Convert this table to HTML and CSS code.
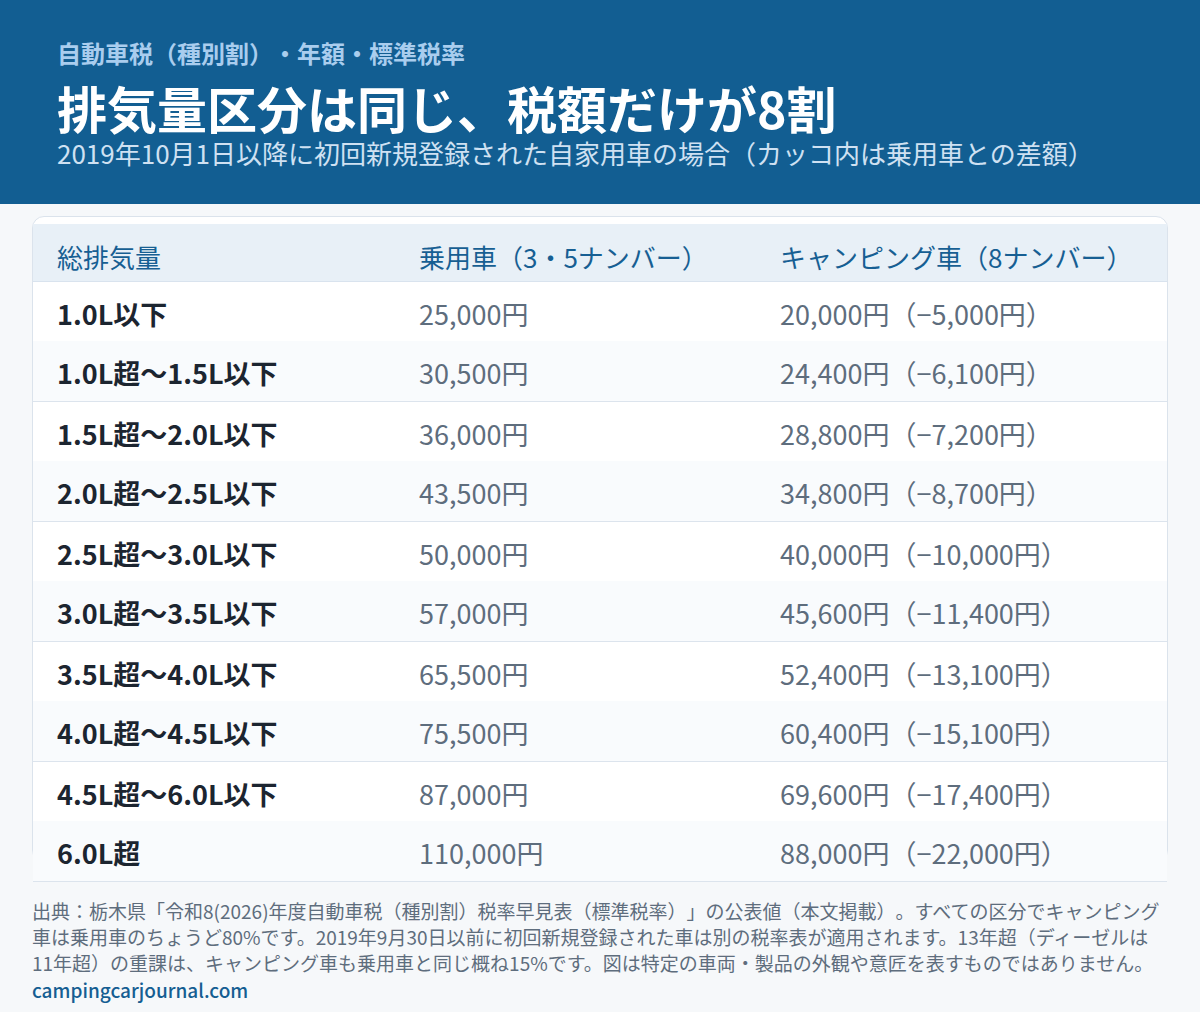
FILE: index.html
```html
<!DOCTYPE html>
<html lang="ja">
<head>
<meta charset="utf-8">
<title>自動車税 排気量区分</title>
<link rel="stylesheet" href="styles.css">
</head>
<body>
<header class="band">
  <p class="eyebrow">自動車税（種別割）・年額・標準税率</p>
  <h1 class="title">排気量区分は同じ、税額だけが8割</h1>
  <p class="subtitle">2019年10月1日以降に初回新規登録された自家用車の場合（カッコ内は乗用車との差額）</p>
</header>
<main class="content">
  <section class="card">
    <table class="rates">
      <thead>
        <tr><th class="c1">総排気量</th><th class="c2">乗用車（3・5ナンバー）</th><th class="c3">キャンピング車（8ナンバー）</th></tr>
      </thead>
      <tbody>
        <tr><td class="cls">1.0L以下</td><td>25,000円</td><td>20,000円（−5,000円）</td></tr>
        <tr><td class="cls">1.0L超〜1.5L以下</td><td>30,500円</td><td>24,400円（−6,100円）</td></tr>
        <tr><td class="cls">1.5L超〜2.0L以下</td><td>36,000円</td><td>28,800円（−7,200円）</td></tr>
        <tr><td class="cls">2.0L超〜2.5L以下</td><td>43,500円</td><td>34,800円（−8,700円）</td></tr>
        <tr><td class="cls">2.5L超〜3.0L以下</td><td>50,000円</td><td>40,000円（−10,000円）</td></tr>
        <tr><td class="cls">3.0L超〜3.5L以下</td><td>57,000円</td><td>45,600円（−11,400円）</td></tr>
        <tr><td class="cls">3.5L超〜4.0L以下</td><td>65,500円</td><td>52,400円（−13,100円）</td></tr>
        <tr><td class="cls">4.0L超〜4.5L以下</td><td>75,500円</td><td>60,400円（−15,100円）</td></tr>
        <tr><td class="cls">4.5L超〜6.0L以下</td><td>87,000円</td><td>69,600円（−17,400円）</td></tr>
        <tr><td class="cls">6.0L超</td><td>110,000円</td><td>88,000円（−22,000円）</td></tr>
      </tbody>
    </table>
  </section>
  <footer class="note">
    <p>出典：栃木県「令和8(2026)年度自動車税（種別割）税率早見表（標準税率）」の公表値（本文掲載）。すべての区分でキャンピング車は乗用車のちょうど80%です。2019年9月30日以前に初回新規登録された車は別の税率表が適用されます。13年超（ディーゼルは11年超）の重課は、キャンピング車も乗用車と同じ概ね15%です。図は特定の車両・製品の外観や意匠を表すものではありません。</p>
    <p class="site">campingcarjournal.com</p>
  </footer>
</main>
</body>
</html>
```

FILE: styles.css
```css
* { box-sizing: border-box; }
html, body { margin: 0; padding: 0; }
body {
  width: 1200px;
  height: 1012px;
  overflow: hidden;
  background: #f6f8fa;
  font-family: "Noto Sans CJK JP", "Noto Sans", sans-serif;
  color: #1c2530;
  text-spacing-trim: space-all;
}
.band {
  background: #125e92;
  height: 204px;
  padding: 37px 57px 0;
}
.eyebrow {
  margin: 0;
  font-size: 24px;
  line-height: 32px;
  font-weight: 700;
  color: #a9cdee;
}
.title {
  margin: 12px 0 0;
  font-size: 50px;
  line-height: 52px;
  font-weight: 700;
  color: #ffffff;
  letter-spacing: 0;
}
.subtitle {
  margin: 4px 0 0;
  font-size: 26px;
  line-height: 32px;
  font-weight: 400;
  color: #cfe1f2;
}
.content {
  padding: 12px 32px 0;
}
.card {
  height: 646px;
  background: #ffffff;
  border: 1px solid #dbe3ec;
  border-radius: 12px;
  padding-top: 7px;
}
.rates {
  width: 100%;
  border-collapse: collapse;
  table-layout: fixed;
}
.rates th, .rates td {
  text-align: left;
  padding: 0 0 0 24px;
  white-space: nowrap;
}
.rates th {
  height: 57px;
  font-size: 26px;
  background: #e8f0f7;
  color: #175f93;
  font-weight: 400;
  border-bottom: 1px solid #d9e3ee;
  padding-top: 8px;
}
.rates .c1 { width: 362px; }
.rates .c2 { width: 361px; }
.rates td {
  height: 60px;
  font-size: 27px;
  color: #5e6d7d;
  font-weight: 400;
  padding-top: 4px;
}
.rates td.cls {
  color: #1c2530;
  font-weight: 700;
}
.rates tbody tr:nth-child(even) td {
  background: #f9fbfd;
  border-bottom: 1px solid #dce4ed;
}
.note {
  margin-top: 36px;
  font-size: 19px;
  line-height: 26px;
  color: #5e6d7d;
}
.note p { margin: 0; }
.note .site {
  color: #155e92;
  font-weight: 500;
  margin-top: 1px;
}
```
